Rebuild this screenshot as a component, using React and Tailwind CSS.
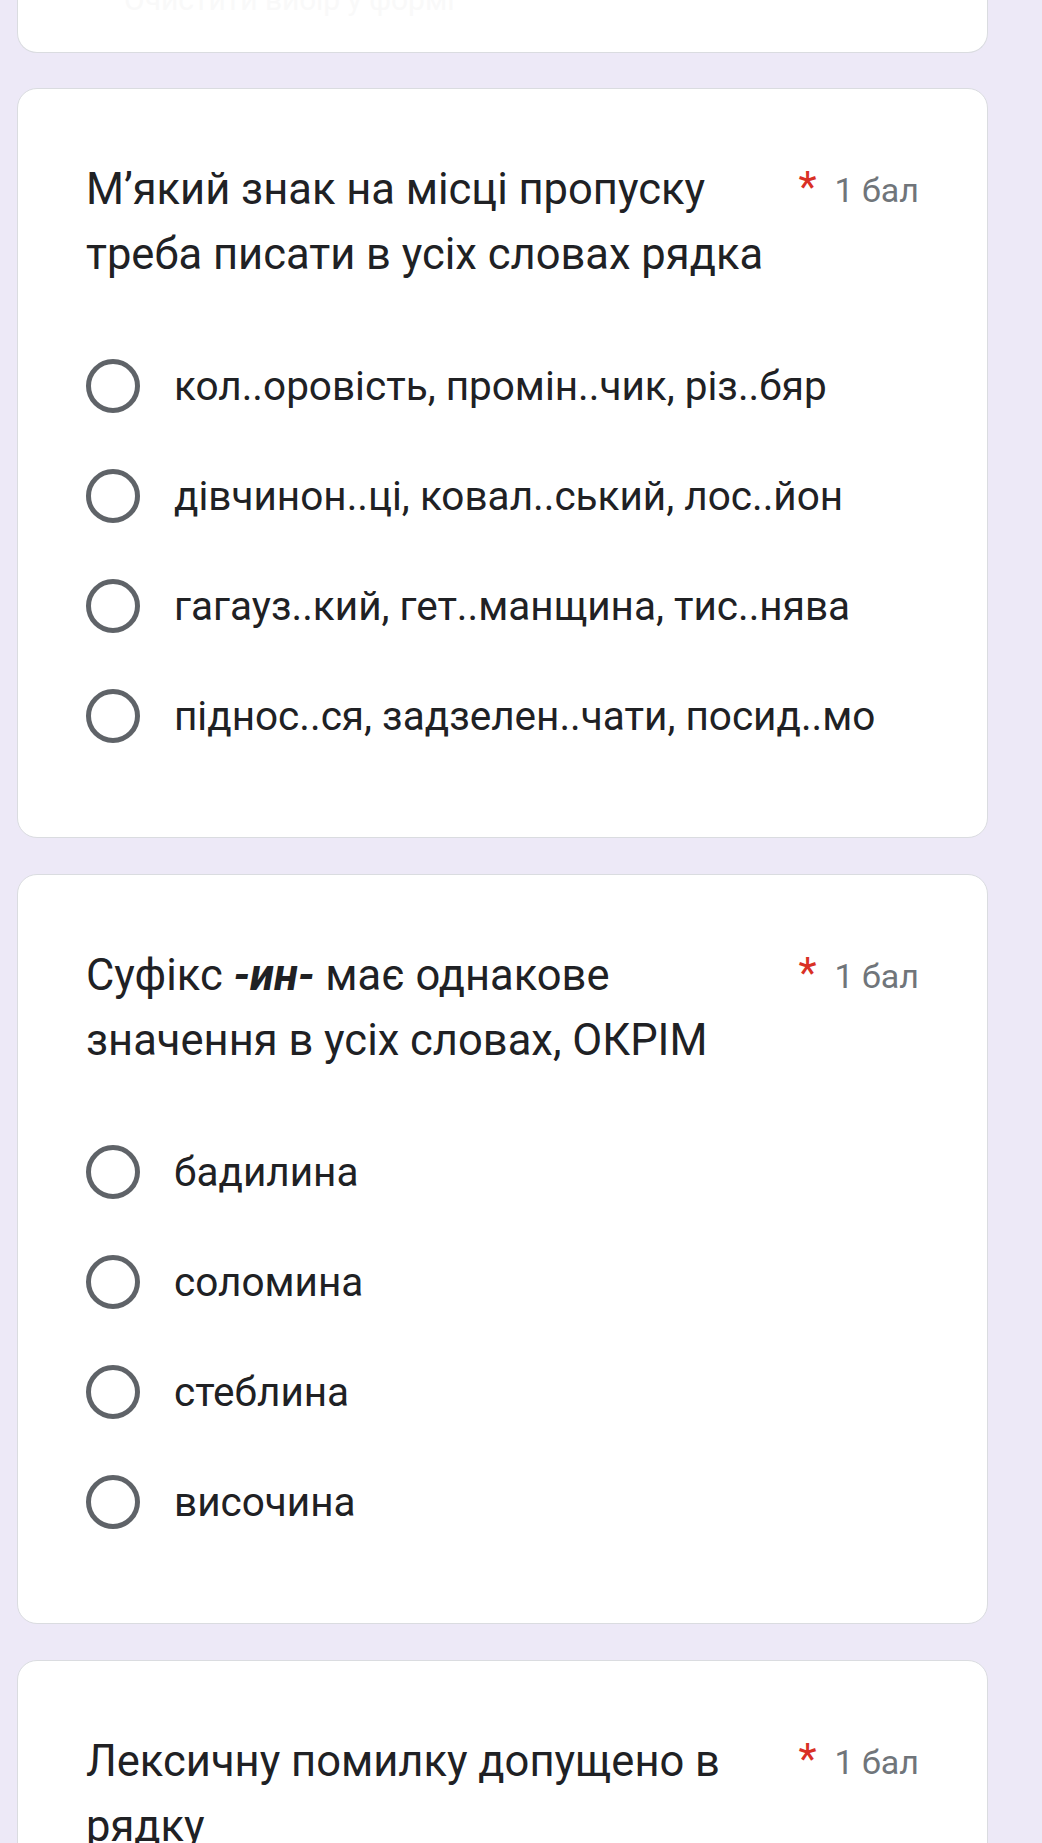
import React from "react";

const questions = [
  {
    title: <>М’який знак на місці пропуску треба писати в усіх словах рядка</>,
    options: [
      "кол..оровість, промін..чик, різ..бяр",
      "дівчинон..ці, ковал..ський, лос..йон",
      "гагауз..кий, гет..манщина, тис..нява",
      "піднос..ся, задзелен..чати, посид..мо",
    ],
  },
  {
    title: (
      <>
        Суфікс <b className="italic font-bold">-ин-</b> має однакове значення в усіх словах, ОКРІМ
      </>
    ),
    options: ["бадилина", "соломина", "стеблина", "височина"],
  },
  {
    title: <>Лексичну помилку допущено в рядку</>,
    options: [],
  },
];

const Radio = () => (
  <span className="block w-[54px] h-[54px] shrink-0 rounded-full border-[5px] border-[#5f6368]" />
);

const QuestionCard = ({ q }) => (
  <div className="bg-white rounded-[20px] border border-[#dadce0] pt-[68px] pb-[66px] pl-[68px] pr-[68px]">
    <div className="flex items-start gap-2">
      <div className="flex-1 text-[43.5px] leading-[65px] text-[#202124]">{q.title}</div>
      <div className="flex items-start shrink-0 pt-[1px]">
        <span className="text-[#d93025] text-[42px] leading-[58px] mr-[18px]">*</span>
        <span className="text-[#70757a] text-[34px] leading-[65px]">1 бал</span>
      </div>
    </div>
    {q.options.length > 0 && (
      <div className="mt-[44px] flex flex-col">
        {q.options.map((o) => (
          <div key={o} className="flex items-center h-[110px] gap-[34px]">
            <Radio />
            <span className="text-[40.5px] text-[#202124] leading-none">{o}</span>
          </div>
        ))}
      </div>
    )}
  </div>
);

export default function App() {
  return (
    <div
      className="w-[1042px] min-h-[1843px] bg-[#ede9f7] overflow-hidden pl-[17px] pr-[54px]"
      style={{ fontFamily: "Roboto, 'Noto Sans', sans-serif" }}
    >
      <div className="flex flex-col bg-white rounded-b-[20px] border border-t-0 border-[#dadce0] h-[53px] pl-[106px]">
        <div className="text-[30px] leading-[16px] -mt-[8px] text-[#f9f9f9]">Очистити вибір у формі</div>
      </div>
      <div className="flex flex-col gap-[36px] mt-[35px]">
        {questions.map((q, i) => (
          <QuestionCard key={i} q={q} />
        ))}
      </div>
    </div>
  );
}
